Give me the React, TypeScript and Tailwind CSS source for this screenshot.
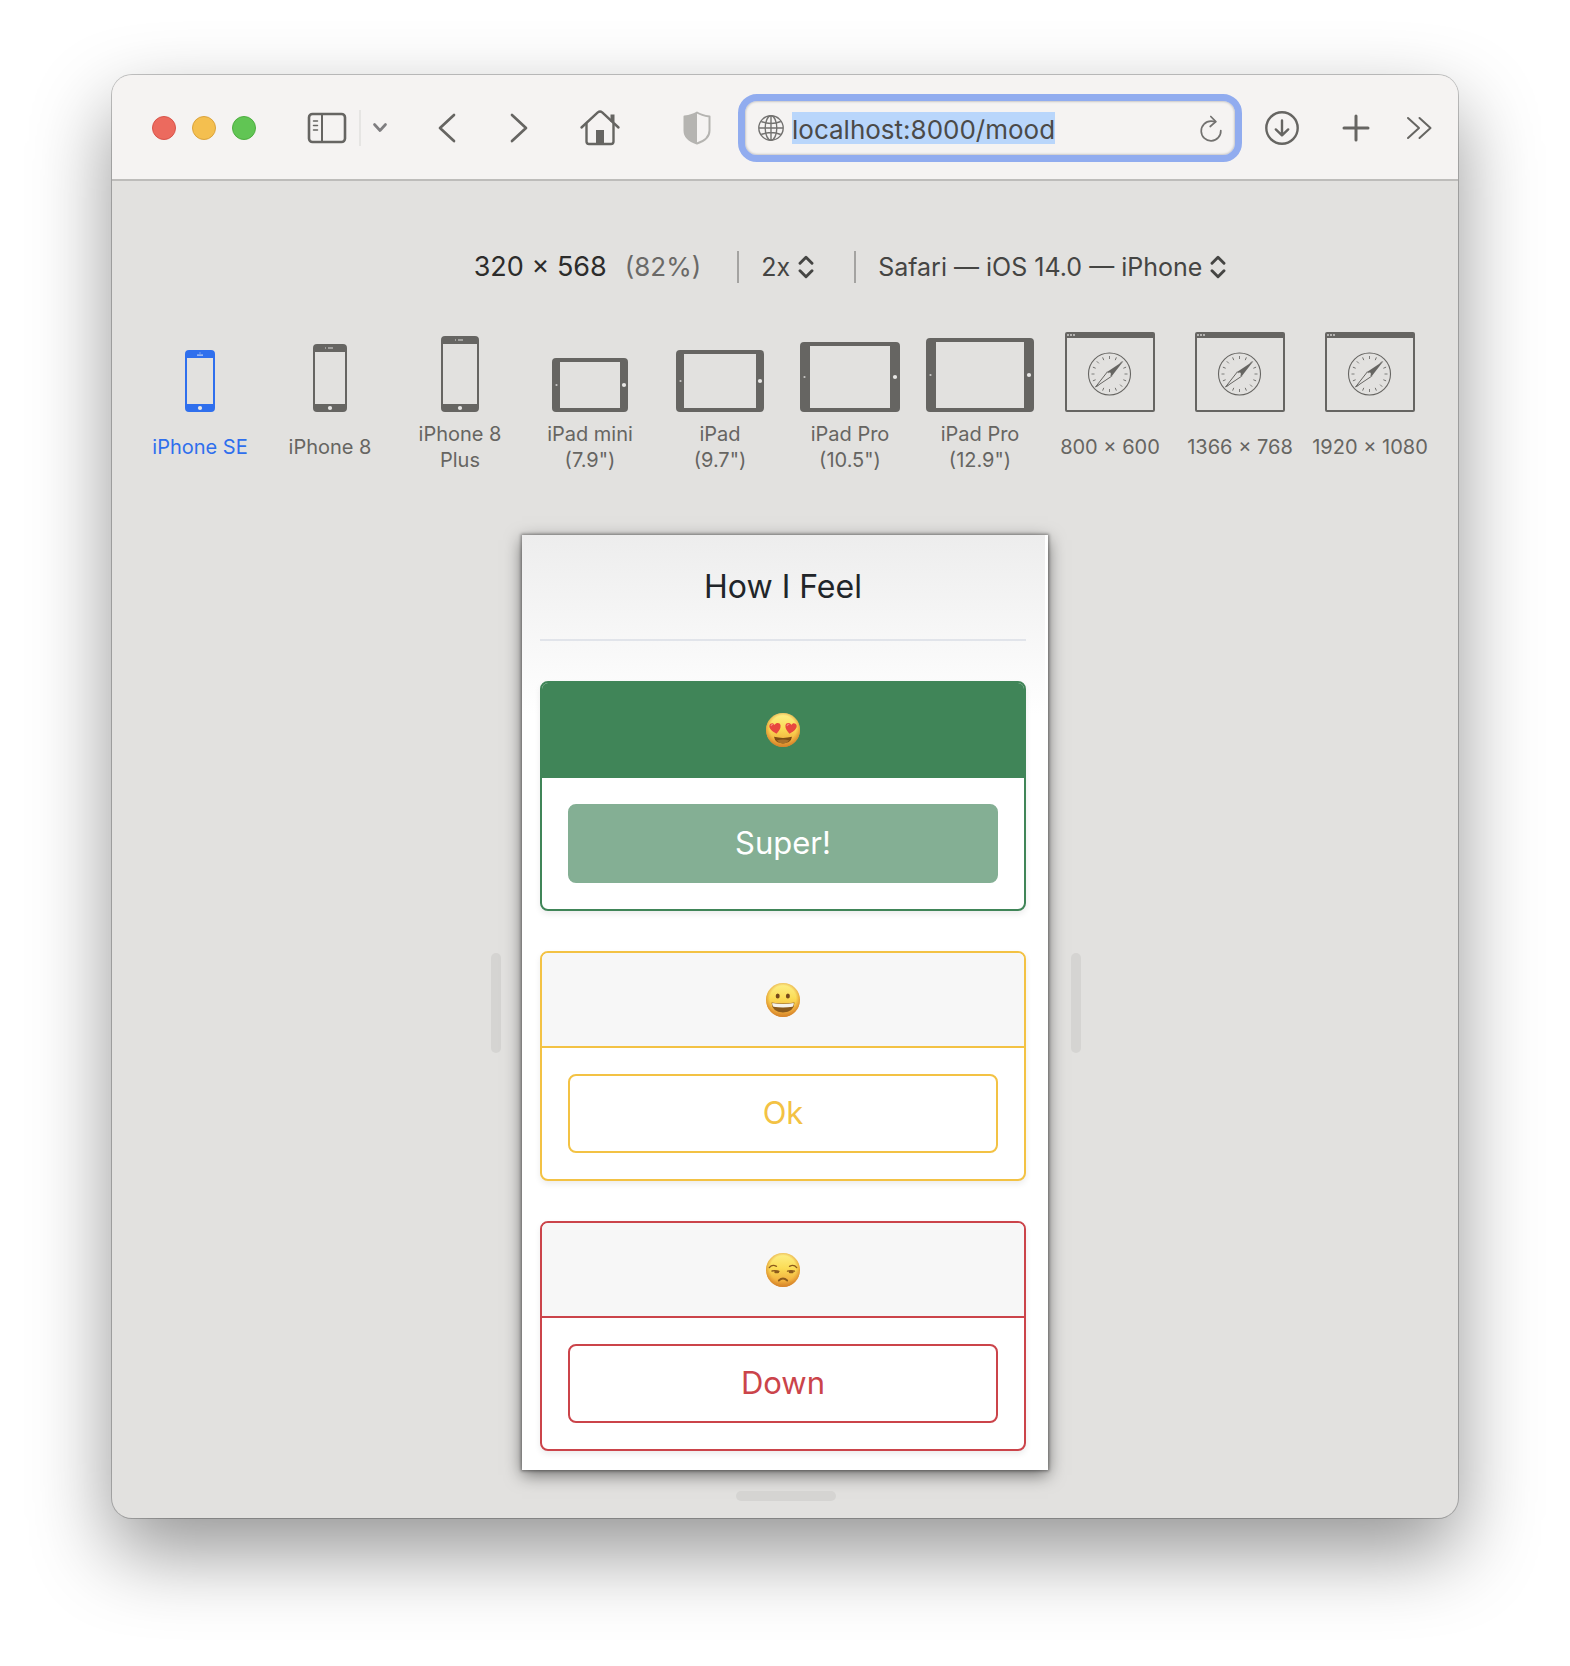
import React from "react";

const INK = "#666562";

function SidebarIcon() {
  return (
    <svg width="40" height="32" viewBox="0 0 40 32" fill="none" stroke={INK} strokeLinecap="round">
      <rect x="2" y="2" width="36" height="28" rx="3.5" strokeWidth="2.6" />
      <path d="M15 2v28" strokeWidth="2" strokeLinecap="butt" />
      <path d="M6.5 9h4M6.5 13.5h4M6.5 18h4" strokeWidth="1.5" />
    </svg>
  );
}

function Angle({ flip = false }: { flip?: boolean }) {
  return (
    <svg width="18" height="30" viewBox="0 0 18 30" fill="none" stroke={INK} strokeWidth="2.7" strokeLinecap="round" strokeLinejoin="round">
      <path d={flip ? "M2 2l14 13L2 28" : "M16 2L2 15l14 13"} />
    </svg>
  );
}

function HomeIcon() {
  return (
    <svg width="42" height="38" viewBox="0 0 42 38" fill="none" stroke={INK} strokeWidth="2.4" strokeLinecap="round" strokeLinejoin="round">
      <path d="M2.5 18.500L18.8 3.400q2.200-1.800 4.400 0L39.5 18.500" />
      <path d="M7.500 15v17.500q0 2.500 2.500 2.500h22q2.500 0 2.500-2.500V15" />
      <path d="M33.500 13V5.500" strokeWidth="4" strokeLinecap="butt" />
      <rect x="17" y="21" width="8" height="14" fill={INK} stroke="none" />
    </svg>
  );
}

function ShieldIcon() {
  return (
    <svg width="28" height="34" viewBox="0 0 28 34" fill="none">
      <path d="M14 1.500C10 4 5 5 1.500 5.600v14C1.500 26 6 30 14 32.500 22 30 26.500 26 26.500 19.600v-14C23 5 18 4 14 1.500z" stroke="#b5b4b1" strokeWidth="2" strokeLinejoin="round" />
      <path d="M14 1.500C10 4 5 5 1 5.600v14C1 26 6 30 14 32.500z" fill="#b5b4b1" />
    </svg>
  );
}

function GlobeIcon() {
  return (
    <svg width="26" height="26" viewBox="0 0 26 26" fill="none" stroke="#737270" strokeWidth="1.4">
      <circle cx="13" cy="13" r="12.200" />
      <ellipse cx="13" cy="13" rx="5.800" ry="12.200" />
      <path d="M13 1v24M1 13h24M3.200 6.500q9.800 4 19.600 0M3.200 19.500q9.800-4 19.600 0" />
    </svg>
  );
}

function ReloadIcon() {
  return (
    <svg width="22" height="27" viewBox="0 0 22 27" fill="none" stroke="#737270" strokeWidth="1.700" strokeLinecap="round" strokeLinejoin="round">
      <path d="M20.800 15.500A9.800 9.800 0 1 1 11 6.200q2.200 0 4.500.6" />
      <path d="M10.800 1.500l5 5.200-5.600 4.800" />
    </svg>
  );
}

function DownloadIcon() {
  return (
    <svg width="36" height="36" viewBox="0 0 36 36" fill="none" stroke={INK} strokeWidth="2.400" strokeLinecap="round" strokeLinejoin="round">
      <circle cx="18" cy="18" r="15.700" />
      <path d="M18 10.500v14.800M11.800 19.400l6.200 6 6.200-6" />
    </svg>
  );
}

function UpDown() {
  return (
    <svg className="pointer-events-none" width="16" height="24" viewBox="0 0 16 24" fill="none" stroke="#454543" strokeWidth="2.900" strokeLinecap="round" strokeLinejoin="round">
      <path d="M2 8.200l6-6 6 6M2 15.800l6 6 6-6" />
    </svg>
  );
}

function Phone({ w, h, se = false }: { w: number; h: number; se?: boolean }) {
  const c = w / 2;
  return (
    <svg width={w} height={h} viewBox={`0 0 ${w} ${h}`}>
      <path
        fillRule="evenodd"
        fill="currentColor"
        d={`M4 0H${w - 4}a4 4 0 0 1 4 4V${h - 4}a4 4 0 0 1-4 4H4a4 4 0 0 1-4-4V4a4 4 0 0 1 4-4zM2 8V${h - 8}H${w - 2}V8z`}
      />
      <circle cx={c} cy={h - 4} r="2.100" fill="#e8e7e5" />
      {se ? (
        <path d={`M${c - 3} 5.200h6M${c - 0.5} 3h1`} stroke="#b9cdf5" strokeWidth="1.200" />
      ) : (
        <path d={`M${c - 2} 4h5M${c - 5} 4h1`} stroke="#b5b4b2" strokeWidth="1.300" />
      )}
    </svg>
  );
}

function Tablet({ w, h, side }: { w: number; h: number; side: number }) {
  return (
    <svg width={w} height={h} viewBox={`0 0 ${w} ${h}`}>
      <path
        fillRule="evenodd"
        fill="currentColor"
        d={`M4 0H${w - 4}a4 4 0 0 1 4 4V${h - 4}a4 4 0 0 1-4 4H4a4 4 0 0 1-4-4V4a4 4 0 0 1 4-4zM${side} 4V${h - 4}H${w - side}V4z`}
      />
      <circle cx="4.500" cy={h / 2} r="1.100" fill="#c9c8c6" />
      <circle cx={w - side / 2} cy={h / 2} r="2.100" fill="#e8e7e5" />
    </svg>
  );
}

function Desktop() {
  const ticks = Array.from({ length: 16 }, (_, i) => i * 22.5);
  return (
    <svg width="90" height="80" viewBox="0 0 90 80">
      <path fillRule="evenodd" fill="currentColor" d="M2 0H88a2 2 0 0 1 2 2V78a2 2 0 0 1-2 2H2a2 2 0 0 1-2-2V2a2 2 0 0 1 2-2zM2 6V78H88V6z" />
      <path d="M2 3h2M5 3h2M8 3h2" stroke="#b5b4b2" strokeWidth="2" />
      <circle cx="44.500" cy="42" r="21" fill="none" stroke="currentColor" strokeWidth="1.100" />
      {ticks.map((a) => (
        <path key={a} d="M44.500 24v3" stroke="currentColor" strokeWidth="0.800" transform={`rotate(${a} 44.500 42)`} />
      ))}
      <path d="M58.500 29L42.400 39.800l4.300 4.400z" fill="currentColor" />
      <path d="M30.500 55L42.400 39.800l4.300 4.400z" fill="#e2e1df" stroke="currentColor" strokeWidth="1" strokeLinejoin="round" />
      <circle cx="44.500" cy="42" r="1.400" fill="#e2e1df" />
    </svg>
  );
}

const devices = [
  { label: "iPhone SE", icon: <Phone w={30} h={62} se /> },
  { label: "iPhone 8", icon: <Phone w={34} h={68} /> },
  { label: "iPhone 8\nPlus", icon: <Phone w={38} h={76} /> },
  { label: "iPad mini\n(7.9\")", icon: <Tablet w={76} h={54} side={8} /> },
  { label: "iPad\n(9.7\")", icon: <Tablet w={88} h={62} side={8} /> },
  { label: "iPad Pro\n(10.5\")", icon: <Tablet w={100} h={70} side={10} /> },
  { label: "iPad Pro\n(12.9\")", icon: <Tablet w={108} h={74} side={10} /> },
  { label: "800 × 600", icon: <Desktop /> },
  { label: "1366 × 768", icon: <Desktop /> },
  { label: "1920 × 1080", icon: <Desktop /> },
];

type Mood = "love" | "happy" | "down";

function Face({ mood }: { mood: Mood }) {
  const id = `face-${mood}`;
  const label = { love: "😍", happy: "😀", down: "😒" }[mood];
  return (
    <svg role="img" aria-label={label} width="34" height="34" viewBox="0 0 34 34">
      <defs>
        <linearGradient id={id} x1="0" y1="0" x2="0" y2="1">
          <stop offset="0" stopColor="#fdf08a" />
          <stop offset="0.450" stopColor="#fbdc55" />
          <stop offset="0.800" stopColor="#f3b340" />
          <stop offset="1" stopColor="#d98a2c" />
        </linearGradient>
        <radialGradient id={`${id}-rim`} cx="0.5" cy="0.460" r="0.540">
          <stop offset="0.700" stopColor="#e2942f" stopOpacity="0" />
          <stop offset="1" stopColor="#d5822a" stopOpacity="0.900" />
        </radialGradient>
      </defs>
      <circle cx="17" cy="17" r="17" fill={`url(#${id})`} />
      <circle cx="17" cy="17" r="17" fill={`url(#${id}-rim)`} />
      {mood === "love" && (
        <>
          <path d="M10.500 20.800C6.500 18.500 2.600 15.600 3.400 12.300c.7-2.600 4-3 5.200-.4 1.600-2.600 5.600-2.400 6 .7.300 3-1.700 5.700-4.100 8.200z" fill="#e8473f" />
          <path d="M23.500 20.800c4-2.300 7.900-5.200 7.100-8.500-.7-2.600-4-3-5.200-.4-1.600-2.600-5.600-2.400-6 .7-.3 3 1.700 5.700 4.100 8.200z" fill="#e8473f" />
          <path d="M5 13q.6-2 2.300-1.600M21 13q.6-2 2.300-1.600" stroke="#f58a78" strokeWidth="1.200" fill="none" />
          <path d="M8 23.800q9 2.200 18 0-1 6.400-9 6.600-8-.2-9-6.600z" fill="#7e4d14" />
          <path d="M10.500 27.600q6.500-2.400 13 0-2.400 2.700-6.500 2.800-4.100-.1-6.500-2.800z" fill="#a8702a" />
        </>
      )}
      {mood === "happy" && (
        <>
          <ellipse cx="11.700" cy="13" rx="2" ry="2.600" fill="#75481a" />
          <ellipse cx="21.900" cy="13" rx="2" ry="2.600" fill="#75481a" />
          <path d="M5.500 19.500q11.500 2 23 0-.5 9.600-11.500 9.900-11-.3-11.500-9.900z" fill="#8a5a1c" />
          <path d="M6.200 20q10.800 1.900 21.600 0 .2 2.400-1.200 3.800-9.600 1.600-19.200 0-1.400-1.400-1.200-3.800z" fill="#f6f3ea" />
        </>
      )}
      {mood === "down" && (
        <g fill="none" stroke="#8c5a1c" strokeLinecap="round">
          <path d="M3.300 14.600q2.800-3.600 7.200-1.300M30.700 14.600q-2.800-3.600-7.200-1.300" strokeWidth="1.400" />
          <path d="M6 18q3.500-.8 7 .4M21.500 18.200q3.500-1 7 0" strokeWidth="1.300" />
          <path d="M9.500 19h2.400M24 19h2.400" strokeWidth="2.400" />
          <path d="M12.800 27.500q4.200-3.800 8.400 0" strokeWidth="1.900" />
        </g>
      )}
    </svg>
  );
}

const moods: { mood: Mood; text: string; card: string; head: string; button: string }[] = [
  {
    mood: "love",
    text: "Super!",
    card: "border-[#408558]",
    head: "border-[#408558] bg-[#408558]",
    button: "border-[#84af94] bg-[#84af94] text-white",
  },
  {
    mood: "happy",
    text: "Ok",
    card: "border-[#f3c244]",
    head: "border-[#f3c244] bg-[#f7f7f7]",
    button: "border-[#f3c244] text-[#f3c244]",
  },
  {
    mood: "down",
    text: "Down",
    card: "border-[#cb444a]",
    head: "border-[#cb444a] bg-[#f7f7f7]",
    button: "border-[#cb444a] text-[#cb444a]",
  },
];

function Toolbar() {
  return (
    <header className="flex h-[106px] items-center border-b-2 border-[#bdbcba] bg-[#f5f3f2] pt-0.5 pr-[26px] pl-10">
      <div className="flex gap-4">
        <button aria-label="Close" className="size-6 rounded-full border border-[#d8544a] bg-[#ec6a5e]" />
        <button aria-label="Minimize" className="size-6 rounded-full border border-[#dba33c] bg-[#f4bf4f]" />
        <button aria-label="Zoom" className="size-6 rounded-full border border-[#4eae40] bg-[#61c554]" />
      </div>
      <button aria-label="Sidebar" className="ml-[51px]">
        <SidebarIcon />
      </button>
      <span className="ml-3 h-9 w-0.5 bg-[#e6e5e3]" />
      <button aria-label="Tab groups" className="ml-[11px]">
        <svg width="16" height="12" viewBox="0 0 16 12" fill="none" stroke="#7f7e80" strokeWidth="2.700" strokeLinecap="round" strokeLinejoin="round">
          <path d="M2.500 2.500L8 8.500l5.500-6" />
        </svg>
      </button>
      <button aria-label="Back" className="ml-[50px]">
        <Angle />
      </button>
      <button aria-label="Forward" className="ml-[54px]">
        <Angle flip />
      </button>
      <button aria-label="Home" className="ml-[51px]">
        <HomeIcon />
      </button>
      <button aria-label="Privacy report" className="ml-[62px]">
        <ShieldIcon />
      </button>
      <div className="ml-[27px] flex h-[68px] min-w-0 flex-1 items-center rounded-[19px] border-[7px] border-[#91acef] bg-[#f5f3f2] pr-[13px] pl-[13px] shadow-[inset_0_0_2px_1px_#c9c8c8]">
        <GlobeIcon />
        <input
          aria-label="Address"
          defaultValue="localhost:8000/mood"
          className="ml-2 h-8 bg-[#b9d6fb] pt-0.5 text-[26px] text-[#4b4a48] outline-none [field-sizing:content]"
        />
        <button aria-label="Reload" className="ml-auto">
          <ReloadIcon />
        </button>
      </div>
      <button aria-label="Downloads" className="ml-[22px]">
        <DownloadIcon />
      </button>
      <button aria-label="New tab" className="ml-[42px]">
        <svg width="28" height="28" viewBox="0 0 28 28" stroke={INK} strokeWidth="3" strokeLinecap="round">
          <path d="M14 2v24M2 14h24" />
        </svg>
      </button>
      <button aria-label="More" className="ml-9">
        <svg width="26" height="24" viewBox="0 0 26 24" fill="none" stroke={INK} strokeWidth="2" strokeLinecap="round" strokeLinejoin="round">
          <path d="M2 2l11 10L2 22M13.500 2l11 10-11 10" />
        </svg>
      </button>
    </header>
  );
}

export default function App() {
  return (
    <div className="bg-white px-28 pt-[75px] pb-[149px] font-[Inter,sans-serif]">
      <div className="overflow-hidden rounded-[20px] bg-[#e2e1df] shadow-[0_0_0_1px_rgba(0,0,0,0.22),0_34px_80px_rgba(0,0,0,0.42)]">
        <Toolbar />

        <div className="flex items-center justify-center pt-[66px] pl-[130px] text-[25px] leading-10">
          <span className="text-[27px] text-[#2c2c2b]">320 × 568</span>
          <span className="ml-[18px] text-[26px] text-[#6a6967]">(82%)</span>
          <span className="ml-9 h-8 w-0.5 bg-[#a4a3a1]" />
          <label className="ml-[22px] flex items-center gap-2 text-[#454543]">
            <select aria-label="Pixel ratio" className="appearance-none outline-none [field-sizing:content]">
              <option>2x</option>
            </select>
            <UpDown />
          </label>
          <span className="ml-10 h-8 w-0.5 bg-[#a4a3a1]" />
          <label className="ml-[22px] flex items-center gap-2 text-[#454543]">
            <select aria-label="User agent" className="appearance-none outline-none [field-sizing:content]">
              <option>Safari — iOS 14.0 — iPhone</option>
            </select>
            <UpDown />
          </label>
        </div>

        <div className="grid grid-cols-10 px-[23px] pt-[45px]">
          {devices.map((d, i) => (
            <button key={d.label} className={i === 0 ? "text-[#2f6fed]" : "text-[#666562]"}>
              <span className="flex h-20 items-end justify-center">{d.icon}</span>
              <span className="mt-2 flex h-[54px] items-center justify-center text-[20px] leading-[26px] whitespace-pre">{d.label}</span>
            </button>
          ))}
        </div>

        <div className="flex items-center justify-center pt-[61px] pl-0.5">
          <span className="mr-[21px] h-[100px] w-2.5 rounded-[5px] bg-[#d5d4d2]" />
          <main className="w-[526px] border-r-[3px] border-white bg-white bg-[linear-gradient(#ededed,#ffffff_180px)] bg-no-repeat pr-[19px] pb-[19px] pl-[18px] shadow-[0_0_3px_1px_rgba(0,0,0,0.4),0_5px_16px_rgba(0,0,0,0.5)]">
            <h1 className="flex h-[106px] items-center justify-center border-b-2 border-[#e1e4ea] text-[32px] text-[#212529]">How I Feel</h1>
            <div className="flex flex-col gap-10 pt-10">
              {moods.map((m) => (
                <section key={m.mood} className={`overflow-hidden rounded-[8px] border-2 bg-white shadow-[0_3px_6px_rgba(0,0,0,0.08)] ${m.card}`}>
                  <div className={`flex h-[95px] items-center justify-center border-b-2 ${m.head}`}>
                    <Face mood={m.mood} />
                  </div>
                  <div className="p-[26px]">
                    <button className={`h-[79px] w-full rounded-[8px] border-2 text-[31px] ${m.button}`}>{m.text}</button>
                  </div>
                </section>
              ))}
            </div>
          </main>
          <span className="ml-[23px] h-[100px] w-2.5 rounded-[5px] bg-[#d5d4d2]" />
        </div>
        <div className="flex justify-center pt-[21px] pb-[17px] pl-0.5">
          <span className="h-2.5 w-[100px] rounded-[5px] bg-[#d5d4d2]" />
        </div>
      </div>
    </div>
  );
}
